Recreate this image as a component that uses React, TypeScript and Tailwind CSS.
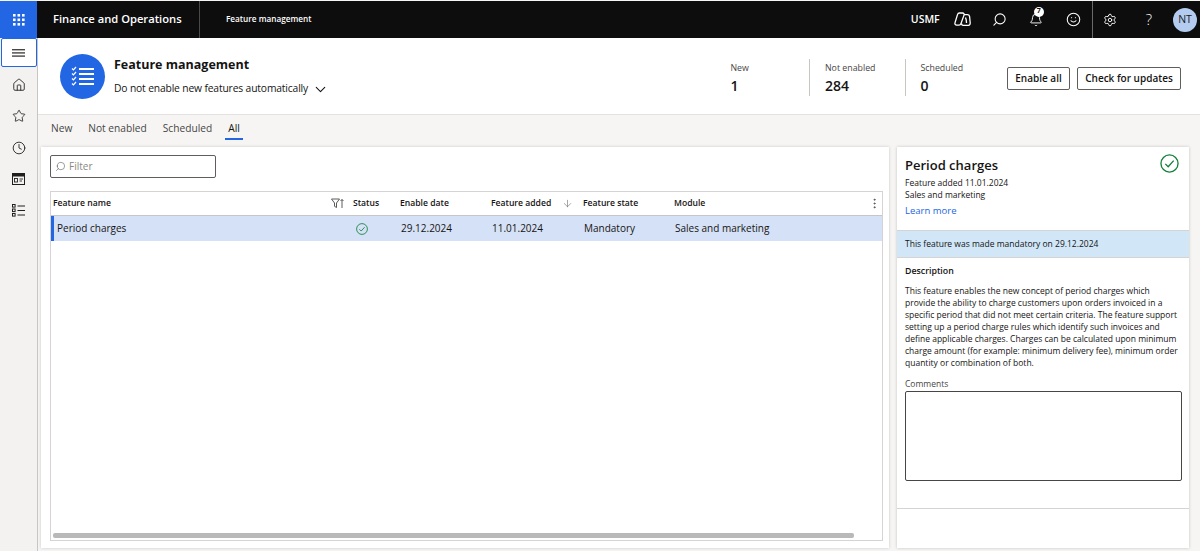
import { Home, Star, Clock, Search, Bell, Smile, Settings, ChevronDown, ArrowDown, EllipsisVertical } from "lucide-react";

// Feature management page: top bar, icon rail, summary header, tabs, grid + details pane.

const FONT = "font-['Open_Sans','Noto_Sans',sans-serif]";

function Waffle() {
  const dots = [0, 1, 2];
  return (
    <svg width="12" height="12" viewBox="0 0 12 12" fill="#fff" aria-hidden>
      {dots.map((r) =>
        dots.map((c) => <rect key={`${r}-${c}`} x={c * 4.5} y={r * 4.5} width="2.6" height="2.6" />)
      )}
    </svg>
  );
}

function ListCheckIcon() {
  return (
    <svg width="24" height="20" viewBox="0 0 24 20" fill="none" stroke="#fff" aria-hidden>
      <path d="M8 3h15M8 8h15M8 13h15M8 18h15" strokeWidth="1.8" />
      <path d="M1 2.5l1.4 1.4L5 1M1 7.5l1.4 1.4L5 6M1 12.5l1.4 1.4L5 11M1 17.5l1.4 1.4L5 16" strokeWidth="1.2" />
    </svg>
  );
}

function CopilotIcon() {
  return (
    <svg width="17" height="15" viewBox="0 0 17 15" fill="none" stroke="#fff" strokeWidth="1.3" aria-hidden>
      <path d="M5.5 1h3c1.300 0 1.900 1 1.500 2.100L7 11.500c-.4 1.100-1 1.600-2 1.600H2.700C1.300 13.100.6 12 1 10.800L3.500 2.600C3.800 1.500 4.500 1 5.500 1z" />
      <path d="M10 2.600h3.400c1.200 0 1.900.7 2.200 1.900l.6 6.300c.1 1.400-.6 2.500-1.800 2.500H9.200c-1.200 0-1.800-.9-1.600-1.900" />
      <path d="M11.500 5.500c.8 1.800 1 3.500 1 5.500" />
    </svg>
  );
}

function WorkspaceIcon() {
  return (
    <svg width="13" height="12" viewBox="0 0 13 12" fill="none" stroke="#201f1e" aria-hidden>
      <rect x="0.5" y="0.5" width="12" height="11" />
      <rect x="1" y="1" width="11" height="2.500" fill="#201f1e" stroke="none" />
      <rect x="2.500" y="5.500" width="3" height="3.500" strokeWidth="0.9" />
      <path d="M7.500 6h3.500M7.500 8h2.500" strokeWidth="0.9" />
    </svg>
  );
}

function ModulesIcon() {
  const rows = [1, 5.5, 10];
  return (
    <svg width="13" height="13" viewBox="0 0 13 13" fill="none" stroke="#201f1e" strokeWidth="1" aria-hidden>
      {rows.map((y) => (
        <g key={y}>
          <rect x="0.5" y={y - 0.5} width="2.600" height="2.600" />
          <path d={`M5.500 ${y + 1}h7.500`} />
        </g>
      ))}
    </svg>
  );
}

function FilterSortIcon() {
  return (
    <svg width="13" height="11" viewBox="0 0 13 11" fill="none" stroke="#4b4a48" strokeWidth="0.9" aria-hidden>
      <path d="M.5 1h8L5.500 5v4.500l-2-1.200V5z" />
      <path d="M11 10V1.500M9.500 3L11 1.500 12.500 3" />
    </svg>
  );
}

function StatusCheck({ size }: { size: number }) {
  return (
    <svg width={size} height={size} viewBox="0 0 20 20" fill="none" stroke="#13803a" aria-hidden>
      <circle cx="10" cy="10" r="9" strokeWidth="1.4" />
      <path d="M5.600 10.400l3 3 5.800-6.400" strokeWidth="1.400" />
    </svg>
  );
}

function SideButton({ children }: { children: React.ReactNode }) {
  return <div className="flex h-[31.5px] w-full items-center justify-center text-[#201f1e]">{children}</div>;
}

function Stat({ label, value, divider }: { label: string; value: string; divider?: boolean }) {
  return (
    <div className={`flex h-[37px] w-[95.5px] flex-col pl-[15px] ${divider ? "border-l border-[#c8c6c4]" : "pl-[17px]"}`}>
      <span className="mt-[2px] text-[8.8px] leading-[14px] text-[#484644]">{label}</span>
      <span className="mt-[2px] text-[14px] leading-[18px] font-semibold text-[#151413]">{value}</span>
    </div>
  );
}

function Th({ className, children }: { className: string; children?: React.ReactNode }) {
  return <div className={`flex shrink-0 items-center text-[8.6px] font-semibold text-[#151413] ${className}`}>{children}</div>;
}

function Td({ className, children }: { className: string; children?: React.ReactNode }) {
  return <div className={`flex shrink-0 items-center text-[10px] text-[#151413] ${className}`}>{children}</div>;
}

export default function App() {
  return (
    <div className={`${FONT} flex h-[551px] w-[1200px] flex-col overflow-hidden bg-[#f6f5f4] pt-px`}>
      {/* top bar */}
      <header className="flex h-[37px] shrink-0 items-center bg-[#0d0d0d] text-white">
        <div className="flex h-full w-[37px] items-center justify-center bg-[#2266e3]">
          <Waffle />
        </div>
        <span className="ml-[16px] w-[130px] text-[11.2px] font-semibold whitespace-nowrap">Finance and Operations</span>
        <div className="ml-[16px] h-full w-px bg-[#4a4a4a]" />
        <span className="ml-[26px] text-[8.2px] font-semibold">Feature management</span>
        <span className="ml-auto text-[10.5px] font-semibold">USMF</span>
        <div className="ml-[14px]"><CopilotIcon /></div>
        <Search size={15} strokeWidth={1.7} className="ml-[21px] -scale-x-100" />
        <div className="relative ml-[22px]">
          <Bell size={14} strokeWidth={1.6} />
          <span className="absolute -top-[6px] left-[5px] flex h-[10px] w-[10px] items-center justify-center rounded-full bg-white text-[7px] font-bold text-[#111]">7</span>
        </div>
        <Smile size={15} strokeWidth={1.7} className="ml-[23px]" />
        <div className="ml-[11px] h-full w-px bg-[#6a6a6a]" />
        <Settings size={14} strokeWidth={1.6} className="ml-[10px]" />
        <span className="ml-[29px] text-[15px] leading-none font-light">?</span>
        <div className="mr-[3px] ml-[21px] flex h-[24px] w-[24px] items-center justify-center rounded-full bg-[#b4ccf0] text-[10.5px] text-[#1b1b1b]">NT</div>
      </header>

      <div className="flex min-h-0 flex-1">
        {/* icon rail */}
        <nav className="flex w-[38px] shrink-0 flex-col items-center border-r border-[#c8c6c4] bg-[#f3f2f1]">
          <div className="flex h-[29px] w-[36px] items-center justify-center rounded-[2px] border border-[#2266e3] bg-white">
            <svg width="13" height="8" viewBox="0 0 13 8" fill="#484644" aria-hidden>
              <rect width="13" height="1.400" />
              <rect y="3.200" width="13" height="1.400" />
              <rect y="6.400" width="13" height="1.400" />
            </svg>
          </div>
          <div className="mt-[2px] w-full">
            <SideButton><Home size={14} strokeWidth={1.5} /></SideButton>
            <SideButton><Star size={14} strokeWidth={1.4} /></SideButton>
            <SideButton><Clock size={14} strokeWidth={1.5} /></SideButton>
            <SideButton><WorkspaceIcon /></SideButton>
            <SideButton><ModulesIcon /></SideButton>
          </div>
        </nav>

        <main className="flex min-w-0 flex-1 flex-col">
          {/* summary header */}
          <section className="flex h-[77px] shrink-0 items-center border-b border-[#e4e2e0] bg-white pr-[19px] pl-[22px]">
            <div className="flex h-[45px] w-[45px] items-center justify-center rounded-full bg-[#2266e3]">
              <ListCheckIcon />
            </div>
            <div className="mt-[1px] ml-[9px]">
              <h1 className="text-[12.5px] leading-[20px] font-bold text-[#151413]">Feature management</h1>
              <div className="mt-[4px] flex items-center text-[10.3px] leading-[15px] tracking-[-0.15px] text-[#151413]">
                Do not enable new features automatically
                <ChevronDown size={17} strokeWidth={1.5} className="mt-[2px] ml-[4px]" />
              </div>
            </div>
            <div className="mt-[2px] ml-auto flex items-start">
              <Stat label="New" value="1" />
              <Stat label="Not enabled" value="284" divider />
              <Stat label="Scheduled" value="0" divider />
            </div>
            <button className="mt-[4px] ml-[7px] h-[23px] w-[63px] rounded-[2px] border border-[#605e5c] text-[10px] font-semibold text-[#151413]">Enable all</button>
            <button className="mt-[4px] ml-[7px] h-[23px] w-[104px] rounded-[2px] border border-[#605e5c] text-[10px] font-semibold text-[#151413]">Check for updates</button>
          </section>

          {/* tabs */}
          <div className="flex h-[32px] shrink-0 items-start gap-[16px] pt-[5px] pl-[13px] text-[10.2px] leading-[16px] text-[#484644]">
            <span>New</span>
            <span>Not enabled</span>
            <span>Scheduled</span>
            <span className="relative text-[#151413]">
              All
              <span className="absolute top-[18px] -right-[3px] -left-[3px] h-[2px] bg-[#2266e3]" />
            </span>
          </div>

          <div className="flex min-h-0 flex-1 gap-[8px] pr-[11px] pb-[3px] pl-[3px]">
            {/* grid panel */}
            <section className="flex min-w-0 flex-1 flex-col bg-white pt-[8px] pr-[6px] pb-[7px] pl-[9px] shadow-[0_0_3px_rgba(0,0,0,0.18)]">
              <div className="flex h-[23px] w-[166px] shrink-0 items-center gap-[3px] rounded-[2px] border border-[#605e5c] pl-[4px] text-[10px] text-[#8a8886]">
                <Search size={11} strokeWidth={1.3} className="-scale-x-100 text-[#605e5c]" />
                Filter
              </div>
              <div className="mt-[13px] flex min-h-0 flex-1 flex-col border border-[#d6d4d2]">
                <div className="flex h-[24px] shrink-0 items-center border-b border-[#c8c6c4] pl-[2px]">
                  <Th className="w-[300px] justify-between pr-[9px]">
                    Feature name
                    <FilterSortIcon />
                  </Th>
                  <Th className="w-[47px]">Status</Th>
                  <Th className="w-[91px]">Enable date</Th>
                  <Th className="w-[92px] justify-between pr-[10px]">
                    Feature added
                    <ArrowDown size={11} strokeWidth={1.2} className="text-[#605e5c]" />
                  </Th>
                  <Th className="w-[91px]">Feature state</Th>
                  <Th className="flex-1">Module</Th>
                  <EllipsisVertical size={13} strokeWidth={1.5} className="mr-px text-[#484644]" />
                </div>
                <div className="flex h-[25px] shrink-0 items-center border-l-[3px] border-[#2266e3] bg-[#d5e1f6] pl-[3px]">
                  <Td className="w-[297px]">Period charges</Td>
                  <Td className="w-[47px]"><span className="ml-[2px]"><StatusCheck size={12} /></span></Td>
                  <Td className="w-[91px]">29.12.2024</Td>
                  <Td className="w-[92px]">11.01.2024</Td>
                  <Td className="w-[91px]">Mandatory</Td>
                  <Td className="">Sales and marketing</Td>
                </div>
                <div className="min-h-0 flex-1" />
                <div className="mb-[2px] ml-[2px] h-[5px] w-[801px] shrink-0 rounded-[2px] bg-[#b9b9b9]" />
              </div>
            </section>

            {/* details pane */}
            <aside className="flex w-[292px] shrink-0 flex-col bg-white shadow-[0_0_3px_rgba(0,0,0,0.2)]">
              <div className="relative h-[84px] shrink-0 border-b border-[#d6d4d2] px-[8px] pt-[8px]">
                <h2 className="text-[13px] leading-[20px] font-semibold text-[#151413]">Period charges</h2>
                <p className="mt-[2px] text-[8.5px] leading-[12px] text-[#151413]">Feature added 11.01.2024</p>
                <p className="text-[8.5px] leading-[12px] text-[#151413]">Sales and marketing</p>
                <p className="mt-[3px] text-[9.5px] leading-[14px] text-[#2266e3]">Learn more</p>
                <span className="absolute top-[7px] right-[10px]"><StatusCheck size={19} /></span>
              </div>
              <div className="flex h-[27px] shrink-0 items-center border-b border-[#d6d4d2] bg-[#d1e7f8] px-[8px] text-[8.5px] text-[#151413]">
                This feature was made mandatory on 29.12.2024
              </div>
              <div className="h-[251px] shrink-0 border-b border-[#d6d4d2] px-[8px] pt-[6px]">
                <h3 className="text-[8.8px] leading-[14px] font-semibold text-[#151413]">Description</h3>
                <p className="mt-[7px] text-[8.5px] leading-[12px] text-[#151413]">
                  This feature enables the new concept of period charges which provide the ability to charge customers upon orders invoiced in a specific period that did not meet certain criteria. The feature support setting up a period charge rules which identify such invoices and define applicable charges. Charges can be calculated upon minimum charge amount (for example: minimum delivery fee), minimum order quantity or combination of both.
                </p>
                <p className="mt-[9px] text-[8.5px] leading-[12px] text-[#484644]">Comments</p>
                <div className="mt-px h-[90px] w-[277px] rounded-[2px] border border-[#484644]" />
              </div>
              <div className="flex-1" />
            </aside>
          </div>
        </main>
      </div>
    </div>
  );
}
